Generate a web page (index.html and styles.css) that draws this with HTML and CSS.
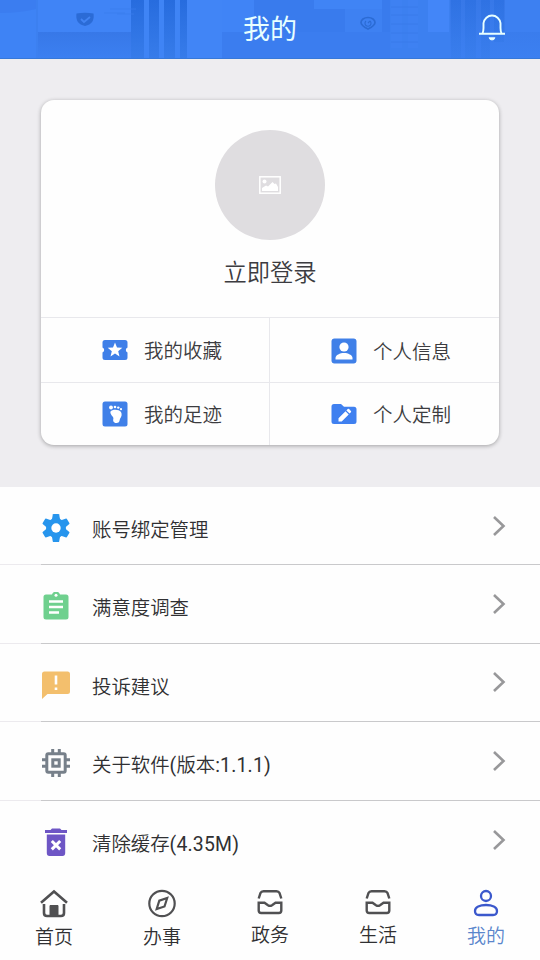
FILE: index.html
```html
<!DOCTYPE html>
<html lang="zh-CN">
<head>
<meta charset="utf-8">
<title>我的</title>
<link rel="stylesheet" href="styles.css">
</head>
<body>
<header class="header">
  <svg class="skyline" width="540" height="59" viewBox="0 0 540 59">
    <defs>
      <linearGradient id="tower" x1="0" y1="0" x2="0" y2="1"><stop offset="0" stop-color="#276cde"/><stop offset="1" stop-color="#377cea"/></linearGradient>
      <linearGradient id="block" x1="0" y1="0" x2="0" y2="1"><stop offset="0" stop-color="#3778e8"/><stop offset="1" stop-color="#3c80f1"/></linearGradient>
    </defs>
    <rect width="540" height="59" fill="#3c80f0"/>
    <path d="M0 0H36V59H0z" fill="#3e83f5"/>
    <path d="M38 0H131V32H38z" fill="#4084f6"/>
    <path d="M38 32H131V59H38z" fill="url(#block)"/>
    <path d="M0 0H36V9Q20 13 0 13z" fill="#3b7df0"/>
    <path d="M131 0H187V59H131z" fill="#3f84f5"/>
    <path d="M131 0H144V59H131zM149 0H159V59H149zM164 0H175V59H164zM180 0H187V59H180z" fill="url(#tower)"/>
    <path d="M187 0H222V59H187z" fill="#4185f6"/>
    <path d="M222 0H254V32H222z" fill="#4084f6"/>
    <path d="M222 32H390V59H222z" fill="#3b7def"/>
    <path d="M254 0H390V32H254z" fill="#397bed"/>
    <path d="M314 0H382V9H314z" fill="#4084f5"/>
    <path d="M345 9H382V32H345z" fill="#3e81f2"/>
    <path d="M391 0H402V48H391zM408 0H418V48H408z" fill="#3e81f2"/>
    <path d="M391 7H418M391 15H418M391 24H418M391 33H418M391 42H418" stroke="#397bea"/>
    <path d="M428 0H449V32H428z" fill="#4386f8"/>
    <path d="M450 0H540V59H450z" fill="url(#block)"/>
    <path d="M451 0H461V59H451zM465 0H476V59H465zM481 0H490V59H481zM494 0H504V42H494z" fill="url(#tower)" opacity=".5"/>
    <path d="M505 0H540V32H505z" fill="#3d80f1"/>
    <path d="M104 13H125M110 9H136M117 14H134" stroke="#3b7dec" stroke-width=".7"/>
    <path d="M76.500 13.500Q85 12 93.500 13.500Q95 24 85 26Q75 24 76.500 13.500z" fill="#2b6bd6"/>
    <path d="M81 19l3 3 6-5" fill="none" stroke="#4284f3" stroke-width="1.800"/>
    <path d="M368 17.500c-4 0-7 2.200-7 5s3 4.500 7 6.500c4-2 7-3.700 7-6.500s-3-5-7-5z" fill="none" stroke="#2b6bd4" stroke-width="1.700"/>
    <path d="M366 21a3 3 0 1 0 4 0M368 23l2-2" fill="none" stroke="#2b6bd4" stroke-width="1.200"/>
    <path d="M0 58.500H540" stroke="#3678d9"/>
  </svg>
  <h1 class="title">我的</h1>
  <svg class="bell" width="28" height="30" viewBox="0 0 28 30" fill="none" stroke="#e8ffff" stroke-width="1.900">
    <path d="M1 20.700H27M4.500 20.500Q5.500 18 5.500 15V10.200a8.600 9 0 0 1 17 0V15Q22.500 18 23.500 20.500"/>
    <path d="M11 24.700H17Q16.500 27 14 27T11 24.700z" fill="#e8ffff" stroke-width=".8"/>
  </svg>
</header>

<main>
  <section class="profile">
    <div class="card">
      <div class="login">
        <div class="avatar">
          <svg width="22" height="18" viewBox="0 0 22 18"><rect x=".8" y=".8" width="20.400" height="16.400" fill="none" stroke="#fff" stroke-width="1.500"/><circle cx="5.500" cy="5.500" r="2" fill="#fff"/><path d="M3 15V12l4-2.500 2 1L13.500 6l2 2 1.500-.5L19 11v4z" fill="#fff"/></svg>
        </div>
        <div class="login-text">立即登录</div>
      </div>
      <div class="shortcuts">
        <div class="shortcut">
          <svg width="26" height="26" viewBox="0 0 26 26"><path d="M3 3H23Q25.500 3 25.500 5.500V10.500a2.700 2.700 0 0 0 0 5V20.500Q25.500 23 23 23H3Q.5 23 .5 20.500V15.500a2.700 2.700 0 0 0 0-5V5.500Q.5 3 3 3z" fill="#3f7fe8"/><path d="M13 5.500l2 4.900 5.300.4-4.100 3.400 1.300 5.200-4.500-2.800-4.500 2.800 1.300-5.200-4.100-3.400 5.300-.4z" fill="#fff"/></svg>
          <span>我的收藏</span>
        </div>
        <div class="shortcut low">
          <svg width="26" height="26" viewBox="0 0 26 26"><rect x=".5" y=".5" width="25" height="25" rx="3" fill="#4080e8"/><circle cx="13" cy="9" r="4.600" fill="#fff"/><path d="M4.500 21.500V20c0-3 4.500-5 8.500-5s8.500 2 8.500 5v1.500z" fill="#fff"/></svg>
          <span>个人信息</span>
        </div>
        <div class="shortcut">
          <svg width="26" height="26" viewBox="0 0 26 26"><rect x=".5" y=".5" width="25" height="25" rx="2.500" fill="#4080e8"/><path d="M8.500 10.500C10 8.200 17 8 19 11c1.300 2.500.5 4.500-.8 6.500-.8 1.500-.2 4.500-3.600 4.500-3.600 0-3.700-2.500-3.200-4.500.4-2-3.800-4-2.900-7z" fill="#fff"/><circle cx="9" cy="6.500" r="1.900" fill="#fff"/><circle cx="13" cy="6" r="1.300" fill="#fff"/><circle cx="16.300" cy="6.600" r="1.200" fill="#fff"/><circle cx="19" cy="8.200" r="1.100" fill="#fff"/></svg>
          <span>我的足迹</span>
        </div>
        <div class="shortcut">
          <svg width="26" height="26" viewBox="0 0 26 26"><path d="M3 3H10l3 2.800H23Q25.500 5.800 25.500 8.300V20.500Q25.500 23 23 23H3Q.5 23 .5 20.500V5.500Q.5 3 3 3z" fill="#3f80f0"/><path d="M7.500 20.500v-3.200l7-7 3.200 3.200-7 7zM15.400 9.400l1.300-1.300q.7-.6 1.400 0l1.800 1.800q.6.700 0 1.400l-1.300 1.300z" fill="#fff"/></svg>
          <span>个人定制</span>
        </div>
      </div>
    </div>
  </section>

  <section class="menu">
    <div class="row">
      <svg class="icon" width="28" height="28" viewBox="0 0 28 28"><defs><path id="tooth" d="M10 5L10.800.5Q10.900 0 11.600 0H16.400Q17.100 0 17.200.5L18 5V9H10z"/></defs><g fill="#2795ed"><use href="#tooth"/><use href="#tooth" transform="rotate(60 14 14)"/><use href="#tooth" transform="rotate(120 14 14)"/><use href="#tooth" transform="rotate(180 14 14)"/><use href="#tooth" transform="rotate(240 14 14)"/><use href="#tooth" transform="rotate(300 14 14)"/><circle cx="14" cy="14" r="10"/></g><circle cx="14" cy="14" r="4.700" fill="#fff"/></svg>
      <span class="label">账号绑定管理</span>
      <svg class="chevron" width="14" height="22" viewBox="0 0 14 22"><path d="M2 2L11.500 11L2 20"/></svg>
    </div>
    <div class="row">
      <svg class="icon" width="28" height="28" viewBox="0 0 28 28"><path d="M4 2.500H10a4.200 4.200 0 0 1 8 0H24Q26.500 2.500 26.500 5V25Q26.500 27.500 24 27.500H4Q1.500 27.500 1.500 25V5Q1.500 2.500 4 2.500z" fill="#6fd08e"/><circle cx="14" cy="3.200" r="1.500" fill="#fff"/><path d="M7 9.500H21M7 15H21M7 20.500H17" stroke="#fff" stroke-width="2.700"/></svg>
      <span class="label">满意度调查</span>
      <svg class="chevron" width="14" height="22" viewBox="0 0 14 22"><path d="M2 2L11.500 11L2 20"/></svg>
    </div>
    <div class="row">
      <svg class="icon" width="28" height="28" viewBox="0 0 28 28"><path d="M2.500.500H25.500Q28 .5 28 3V20.500Q28 23 25.500 23H5.500L0 28V3Q0 .5 2.500.5z" fill="#f3bf6d"/><path d="M12.700 4.500H15.300V13.500H12.700zM12.700 16.500H15.300V19H12.700z" fill="#fff"/></svg>
      <span class="label">投诉建议</span>
      <svg class="chevron" width="14" height="22" viewBox="0 0 14 22"><path d="M2 2L11.500 11L2 20"/></svg>
    </div>
    <div class="row">
      <svg class="icon" width="28" height="28" viewBox="0 0 28 28" fill="none" stroke="#77808a" stroke-width="3"><rect x="4.800" y="4.800" width="18.400" height="18.400" rx="1.500"/><rect x="10.800" y="10.800" width="6.400" height="6.400"/><path d="M10.700 0V4M17.300 0V4M10.700 24V28M17.300 24V28M0 10.700H4M0 17.300H4M24 10.700H28M24 17.300H28"/></svg>
      <span class="label">关于软件<span class="latin">(</span>版本<span class="latin">:1.1.1)</span></span>
      <svg class="chevron" width="14" height="22" viewBox="0 0 14 22"><path d="M2 2L11.500 11L2 20"/></svg>
    </div>
    <div class="row">
      <svg class="icon" width="28" height="28" viewBox="0 0 28 28"><path d="M3 2H8.500L10 .5H18L19.500 2H25V5H3zM4.800 6.500H23.200V25Q23.200 28 20.500 28H7.500Q4.800 28 4.800 25z" fill="#6e56c5"/><path d="M9.800 13L18.200 21.400M18.200 13L9.800 21.400" stroke="#fff" stroke-width="3"/></svg>
      <span class="label">清除缓存<span class="latin">(4.35M)</span></span>
      <svg class="chevron" width="14" height="22" viewBox="0 0 14 22"><path d="M2 2L11.500 11L2 20"/></svg>
    </div>
  </section>
</main>

<nav class="tabs">
  <div class="tab">
    <svg width="30" height="30" viewBox="0 0 30 30" fill="none" stroke="#505052" stroke-width="2.600"><path d="M2 14.800L15 3.500L28 14.800"/><path d="M5 16V25Q5 28 8 28H22Q25 28 25 25V16"/><path d="M11 28V17.500H19V28z" fill="#505052" stroke-width="1"/></svg>
    <span>首页</span>
  </div>
  <div class="tab">
    <svg width="30" height="30" viewBox="0 0 30 30" fill="none" stroke="#505052" stroke-width="2.200"><circle cx="15" cy="15.500" r="12.700"/><path d="M20.200 10L17.500 18.500L9.700 21L12.300 12.700z" stroke-width="2.200"/></svg>
    <span>办事</span>
  </div>
  <div class="tab raised">
    <svg width="30" height="30" viewBox="0 0 30 30" fill="none" stroke="#505052" stroke-width="2.400"><path d="M3.700 10.500L5.500 5Q6.300 3.200 8.500 3.200H21.500Q23.700 3.200 24.500 5L26.300 10.500"/><path d="M3.700 14.700H9.500L13 17.200Q15 18.500 17 17.200L20.500 14.700H26.300V22.500Q26.300 25 23.800 25H6.200Q3.700 25 3.700 22.500z"/></svg>
    <span>政务</span>
  </div>
  <div class="tab raised">
    <svg width="30" height="30" viewBox="0 0 30 30" fill="none" stroke="#505052" stroke-width="2.400"><path d="M3.700 10.500L5.500 5Q6.300 3.200 8.500 3.200H21.500Q23.700 3.200 24.500 5L26.300 10.500"/><path d="M3.700 14.700H9.500L13 17.200Q15 18.500 17 17.200L20.500 14.700H26.300V22.500Q26.300 25 23.800 25H6.200Q3.700 25 3.700 22.500z"/></svg>
    <span>生活</span>
  </div>
  <div class="tab active">
    <svg width="30" height="30" viewBox="0 0 30 30" fill="none" stroke="#3b58cc" stroke-width="2.300"><circle cx="15" cy="8" r="5"/><path d="M4 23C4 19 9 17 15 17S26 19 26 23Q26 27 22 27H8Q4 27 4 23z"/></svg>
    <span>我的</span>
  </div>
</nav>
</body>
</html>
```
FILE: styles.css
```css
* {
  box-sizing: border-box;
}

body {
  margin: 0;
  width: 540px;
  height: 960px;
  overflow: hidden;
  display: flex;
  flex-direction: column;
  background: #fefefe;
  color: #3c3c40;
  font-family: Roboto, "Noto Sans CJK SC", sans-serif;
  font-weight: 350;
}

svg {
  display: block;
  flex: none;
}

.header {
  position: relative;
  flex: none;
  height: 59px;
  display: grid;
  grid-template-columns: 1fr auto 1fr;
  align-items: center;
  padding: 0 34px;
  color: #e8ffff;
}

.skyline {
  position: absolute;
  top: 0;
  left: 0;
}

.title {
  position: relative;
  grid-column: 2;
  margin: 0;
  font-size: 27px;
  line-height: 40px;
  font-weight: 400;
}

.bell {
  position: relative;
  justify-self: end;
  margin-bottom: 4px;
}

.profile {
  height: 428px;
  padding: 41px 41px 0;
  background: #eeedf0;
}

.card {
  height: 345px;
  border-radius: 13px;
  background: #fefefe;
  box-shadow: 0 1px 4px rgba(0, 0, 0, 0.32);
  overflow: hidden;
}

.login {
  height: 217px;
  padding-top: 30px;
  display: flex;
  flex-direction: column;
  align-items: center;
}

.avatar {
  width: 110px;
  height: 110px;
  border-radius: 50%;
  background: #dfdde0;
  display: flex;
  align-items: center;
  justify-content: center;
}

.login-text {
  margin-top: 16px;
  font-size: 23.3px;
  line-height: 34px;
}

.shortcuts {
  display: grid;
  grid-template-columns: 229px 229px;
  grid-template-rows: 65px 63px;
}

.shortcut {
  display: flex;
  align-items: center;
  gap: 16px;
  padding-left: 61px;
  border-top: 1px solid #e8e8ec;
  font-size: 19.5px;
  line-height: 28px;
}

.shortcut span {
  padding-top: 4px;
}

.shortcut:nth-child(odd) {
  border-right: 1px solid #e8e8ec;
}

.low {
  padding-top: 1px;
}

.row {
  height: 78.500px;
  display: flex;
  align-items: center;
  padding: 5px 34px 0 42px;
  border-bottom: 1.500px solid;
  border-image: linear-gradient(to right, #eceaee 42px, #c9c9cb 42px) 1;
}

.row:first-child {
  height: 78px;
}

.row:last-child {
  border-bottom: 0;
}

.label {
  flex: 1;
  margin-left: 22px;
  padding-top: 6px;
  font-size: 19.4px;
  line-height: 28px;
  color: #303032;
}

.latin {
  font-weight: 400;
  letter-spacing: 0.2px;
}

.chevron {
  margin-bottom: 5px;
  fill: none;
  stroke: #98989a;
  stroke-width: 2.600;
}

.tabs {
  flex: 1;
  display: grid;
  grid-template-columns: repeat(5, 108px);
  padding-top: 8.500px;
}

.tab {
  display: flex;
  flex-direction: column;
  align-items: center;
  gap: 6px;
  font-size: 19px;
  line-height: 28px;
  color: #303032;
}

.raised {
  gap: 4px;
}

.active {
  gap: 5px;
  color: #5a86cc;
}
```
